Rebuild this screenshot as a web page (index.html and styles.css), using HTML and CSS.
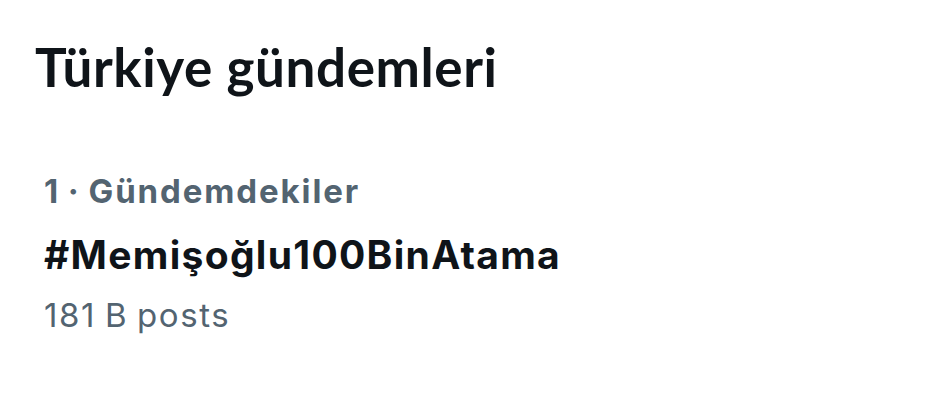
FILE: index.html
```html
<!DOCTYPE html>
<html lang="tr">
<head>
<meta charset="utf-8">
<link rel="stylesheet" href="styles.css">
</head>
<body>
<main class="panel">
  <h1 class="title">Türkiye gündemleri</h1>
  <section class="trend">
    <div class="meta">1 · Gündemdekiler</div>
    <div class="tag">#Memişoğlu100BinAtama</div>
    <div class="count">181 B posts</div>
  </section>
</main>
</body>
</html>
```
FILE: styles.css
```css
html, body {
  margin: 0;
  padding: 0;
  background: #ffffff;
}
.panel {
  width: 948px;
  height: 407px;
  box-sizing: border-box;
  padding: 35px 0 0 35px;
  color: #0f1419;
}
.title {
  margin: 0;
  font-family: Lato, "Inter", sans-serif;
  font-weight: 700;
  font-size: 53px;
  line-height: 64px;
  letter-spacing: 0.6px;
}
.trend {
  padding: 70px 0 0 9px;
  font-family: Inter, sans-serif;
}
.meta {
  color: #536471;
  font-weight: 700;
  font-size: 33px;
  line-height: 44px;
  letter-spacing: 1.9px;
  word-spacing: -2px;
}
.tag {
  font-weight: 700;
  font-size: 39px;
  line-height: 52px;
  letter-spacing: 1.3px;
  margin-top: 16px;
}
.count {
  color: #536471;
  font-size: 33px;
  line-height: 44px;
  letter-spacing: 1.6px;
  word-spacing: -2px;
  margin-top: 12px;
}
```
